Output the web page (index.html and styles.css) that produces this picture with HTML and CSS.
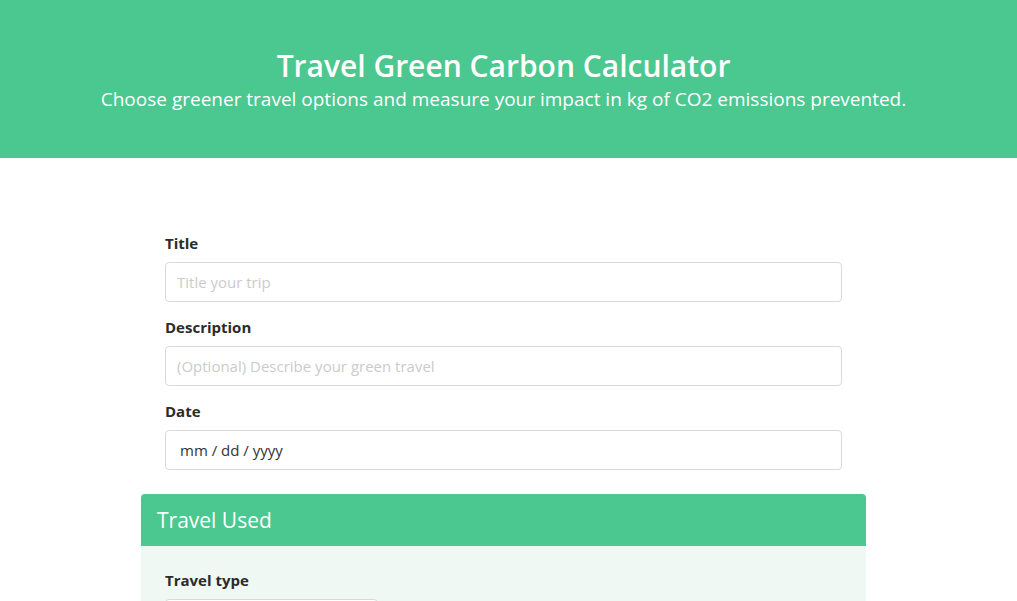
FILE: index.html
```html
<!DOCTYPE html>
<html lang="en">
<head>
<meta charset="utf-8">
<title>Travel Green Carbon Calculator</title>
<link rel="stylesheet" href="styles.css">
</head>
<body>
<header class="hero">
  <div class="hero-inner">
    <h1 class="hero-title">Travel Green Carbon Calculator</h1>
    <p class="hero-sub">Choose greener travel options and measure your impact in kg of CO2 emissions prevented.</p>
  </div>
</header>
<main class="page">
  <form class="form">
    <div class="fields">
      <div class="group">
        <label class="label" for="title">Title</label>
        <input class="input" id="title" type="text" placeholder="Title your trip">
      </div>
      <div class="group">
        <label class="label" for="desc">Description</label>
        <input class="input" id="desc" type="text" placeholder="(Optional) Describe your green travel">
      </div>
      <div class="group">
        <label class="label" for="date">Date</label>
        <div class="input date-input" id="date">mm / dd / yyyy</div>
      </div>
    </div>
    <section class="card">
      <div class="card-header">Travel Used</div>
      <div class="card-body">
        <div class="group">
          <label class="label" for="ttype">Travel type</label>
          <div class="input select" id="ttype"></div>
        </div>
      </div>
    </section>
  </form>
</main>
</body>
</html>
```

FILE: styles.css
```css
* { box-sizing: border-box; }
html, body { margin: 0; padding: 0; }
body {
  font-family: "Open Sans", "Noto Sans", sans-serif;
  color: #2b2b2b;
  background: #ffffff;
  overflow: hidden;
}
.hero {
  background: #4ac88f;
  color: #ffffff;
  height: 158px;
}
.hero-inner {
  margin-right: 10px;
  text-align: center;
  padding-top: 46px;
}
.hero-title {
  margin: 0;
  font-size: 30px;
  font-weight: 600;
  line-height: 40px;
}
.hero-sub {
  margin: 0;
  font-size: 19px;
  line-height: 26px;
}
.page {
  margin-right: 10px;
  padding-top: 72px;
}
.form {
  width: 725px;
  margin: 0 auto;
}
.fields {
  padding: 0 24px;
}
.group {
  display: flex;
  flex-direction: column;
  gap: 8px;
  margin-bottom: 12px;
}
.label {
  font-size: 15px;
  font-weight: 700;
  line-height: 24px;
  padding-top: 1px;
  margin-bottom: -1px;
  color: #2b2b2b;
}
.input {
  height: 40px;
  border: 1px solid #d9d9d9;
  border-radius: 4px;
  padding: 0 11px;
  font-family: inherit;
  font-size: 15px;
  color: #333;
  background: #fff;
  width: 100%;
  outline: none;
}
.input::placeholder { color: #cbcbcb; }
.date-input {
  display: flex;
  align-items: center;
  padding-left: 14px;
  font-size: 15px;
  color: #333;
}
.card {
  margin-top: 24px;
  border-radius: 4px;
  overflow: hidden;
  background: #eff8f3;
}
.card-header {
  background: #4ac88f;
  color: #fff;
  height: 52px;
  display: flex;
  align-items: center;
  padding: 0 16px;
  font-size: 21px;
}
.card-body {
  padding: 21px 24px 24px;
}
.select {
  width: 213px;
}
```
